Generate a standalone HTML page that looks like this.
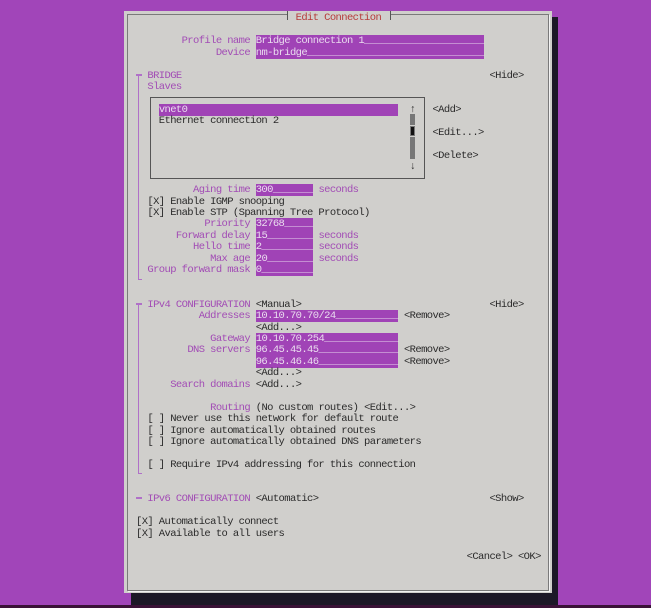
<!DOCTYPE html>
<html><head><meta charset="utf-8"><style>
html,body{margin:0;padding:0;}
body{width:651px;height:608px;background:#a145b9;position:relative;overflow:hidden;}
.abs{position:absolute;}
pre{position:absolute;left:136px;top:13.3px;margin:0;font-family:"Liberation Mono",monospace;font-size:10.5px;letter-spacing:-0.6px;line-height:11.45px;color:#2a2a2a;white-space:pre;}
.l{color:#a24cb5;}
.f{background:#a043b6;color:#eadcef;}
.t{color:#b63a3a;background:#d0cfcc;}
.v{background:#b070c8;}
</style></head><body>
<div class="abs" style="left:0;top:605px;width:651px;height:3px;background:#3a1237"></div>
<div class="abs" style="left:131px;top:17px;width:427px;height:588px;background:#1c1827"></div>
<div class="abs" style="left:124px;top:11px;width:428px;height:582px;background:#d0cfcc"></div>
<div class="abs" style="left:127px;top:14px;width:420px;height:575px;border:1px solid #7a7a7a;box-shadow:1px 1px 0 #f2f2f2"></div>
<div class="abs" style="left:287px;top:11px;width:102px;height:9px;background:#d0cfcc;border-left:1px solid #555;border-right:1px solid #555"></div>
<div class="abs" style="left:150px;top:97px;width:273px;height:80px;border:1px solid #555"></div>
<div class="abs" style="left:410px;top:114px;width:5px;height:11px;background:#777"></div>
<div class="abs" style="left:410px;top:126px;width:5px;height:10px;background:#777"></div>
<div class="abs" style="left:411px;top:127px;width:3px;height:8px;background:#111"></div>
<div class="abs" style="left:410px;top:137px;width:5px;height:22px;background:#777"></div>
<div class="abs v" style="left:136px;top:74px;width:6px;height:2px"></div>
<div class="abs v" style="left:138px;top:74px;width:1px;height:206px"></div>
<div class="abs v" style="left:138px;top:279px;width:4px;height:1px"></div>
<div class="abs v" style="left:136px;top:303px;width:6px;height:2px"></div>
<div class="abs v" style="left:138px;top:303px;width:1px;height:171px"></div>
<div class="abs v" style="left:138px;top:473px;width:4px;height:1px"></div>
<div class="abs v" style="left:136px;top:497px;width:6px;height:2px"></div>
<pre>                            <span class="t">Edit Connection</span>

        <span class="l">Profile name</span> <span class="f">Bridge connection 1_____________________</span>
              <span class="l">Device</span> <span class="f">nm-bridge_______________________________</span>

  <span class="l">BRIDGE</span>                                                      &lt;Hide&gt;
  <span class="l">Slaves</span>

    <span class="f">vnet0                                     </span>  ↑   &lt;Add&gt;
    Ethernet connection 2
                                                    &lt;Edit...&gt;

                                                    &lt;Delete&gt;
                                                ↓

          <span class="l">Aging time</span> <span class="f">300_______</span> <span class="l">seconds</span>
  [X] Enable IGMP snooping
  [X] Enable STP (Spanning Tree Protocol)
            <span class="l">Priority</span> <span class="f">32768_____</span>
       <span class="l">Forward delay</span> <span class="f">15________</span> <span class="l">seconds</span>
          <span class="l">Hello time</span> <span class="f">2_________</span> <span class="l">seconds</span>
             <span class="l">Max age</span> <span class="f">20________</span> <span class="l">seconds</span>
  <span class="l">Group forward mask</span> <span class="f">0_________</span>


  <span class="l">IPv4 CONFIGURATION</span> &lt;Manual&gt;                                 &lt;Hide&gt;
           <span class="l">Addresses</span> <span class="f">10.10.70.70/24___________</span> &lt;Remove&gt;
                     &lt;Add...&gt;
             <span class="l">Gateway</span> <span class="f">10.10.70.254_____________</span>
         <span class="l">DNS servers</span> <span class="f">96.45.45.45______________</span> &lt;Remove&gt;
                     <span class="f">96.45.46.46______________</span> &lt;Remove&gt;
                     &lt;Add...&gt;
      <span class="l">Search domains</span> &lt;Add...&gt;

             <span class="l">Routing</span> (No custom routes) &lt;Edit...&gt;
  [ ] Never use this network for default route
  [ ] Ignore automatically obtained routes
  [ ] Ignore automatically obtained DNS parameters

  [ ] Require IPv4 addressing for this connection


  <span class="l">IPv6 CONFIGURATION</span> &lt;Automatic&gt;                              &lt;Show&gt;

[X] Automatically connect
[X] Available to all users

                                                          &lt;Cancel&gt; &lt;OK&gt;</pre>
</body></html>
